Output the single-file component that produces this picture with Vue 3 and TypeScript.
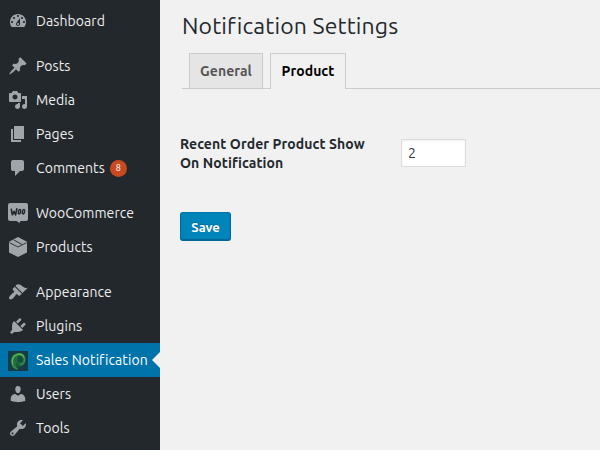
<script setup lang="ts">
import { ref } from 'vue'

interface MenuItem {
  label: string
  icon: string
  path?: string
  count?: number
}

const groups: MenuItem[][] = [
  [
    { label: 'Dashboard', icon: 'dashboard', path: 'M3.76 16h12.48c1.1-1.37 1.76-3.11 1.76-5 0-4.42-3.58-8-8-8s-8 3.58-8 8c0 1.89.66 3.63 1.76 5zM10 4c.55 0 1 .45 1 1s-.45 1-1 1-1-.45-1-1 .45-1 1-1zM6 6c.55 0 1 .45 1 1s-.45 1-1 1-1-.45-1-1 .45-1 1-1zm8 0c.55 0 1 .45 1 1s-.45 1-1 1-1-.45-1-1 .45-1 1-1zm-5.37 5.55L12 7v6c0 1.1-.9 2-2 2s-2-.9-2-2c0-.57.24-1.08.63-1.45zM4 10c.55 0 1 .45 1 1s-.45 1-1 1-1-.45-1-1 .45-1 1-1zm12 0c.55 0 1 .45 1 1s-.45 1-1 1-1-.45-1-1 .45-1 1-1zm-5 3c0-.55-.45-1-1-1s-1 .45-1 1 .45 1 1 1 1-.45 1-1z' },
  ],
  [
    { label: 'Posts', icon: 'post', path: 'M10.44 3.02l1.82-1.82 6.36 6.35-1.83 1.82c-1.05-.68-2.48-.57-3.41.36l-.75.75c-.92.93-1.04 2.35-.35 3.41l-1.83 1.82-2.41-2.41-2.8 2.79c-.42.42-3.38 2.71-3.8 2.29s1.86-3.39 2.28-3.81l2.79-2.79L4.1 9.36l1.83-1.82c1.05.69 2.48.57 3.4-.36l.75-.75c.93-.92 1.05-2.35.36-3.41z' },
    { label: 'Media', icon: 'media', path: 'M13 11V4c0-.55-.45-1-1-1h-1.67L9 1H5L3.67 3H2c-.55 0-1 .45-1 1v7c0 .55.45 1 1 1h10c.55 0 1-.45 1-1zM7 4.5c1.38 0 2.5 1.12 2.5 2.5S8.38 9.5 7 9.5 4.5 8.38 4.5 7 5.62 4.5 7 4.5zM14 6h5v10.5c0 1.38-1.12 2.5-2.5 2.5S14 17.88 14 16.5s1.12-2.5 2.5-2.5c.17 0 .34.02.5.05V9h-3V6zm-4 8.05V13h2v3.5c0 1.38-1.12 2.5-2.5 2.5S7 17.88 7 16.5 8.12 14 9.5 14c.17 0 .34.02.5.05z' },
    { label: 'Pages', icon: 'page', path: 'M6 15V2h10v13H6zm-1 1h8v2H3V5h2v11z' },
    { label: 'Comments', icon: 'comments', count: 8, path: 'M5 2h9c1.1 0 2 .9 2 2v7c0 1.1-.9 2-2 2h-2l-5 5v-5H5c-1.1 0-2-.9-2-2V4c0-1.1.9-2 2-2z' },
  ],
  [
    { label: 'WooCommerce', icon: 'woo' },
    { label: 'Products', icon: 'box' },
  ],
  [
    { label: 'Appearance', icon: 'appearance', path: 'M14.48 11.06L7.41 3.99l1.5-1.5c.5-.56 2.3-.47 3.51.32 1.21.8 1.43 1.28 2.91 2.1 1.18.64 2.45 1.26 4.45.85zm-.71.71L6.7 4.7 4.93 6.47c-.39.39-.39 1.02 0 1.41l1.06 1.06c.39.39.39 1.03 0 1.42-.6.6-1.43 1.11-2.21 1.69-.35.26-.7.53-1.01.84C1.43 14.23.4 16.08 1.4 17.07c.99 1 2.84-.03 4.18-1.36.31-.31.58-.66.85-1.02.57-.78 1.08-1.61 1.69-2.21.39-.39 1.02-.39 1.41 0l1.06 1.06c.39.39 1.02.39 1.41 0z' },
    { label: 'Plugins', icon: 'plugins', path: 'M13.11 4.36L9.87 7.6 8 5.73l3.24-3.24c.35-.34 1.05-.2 1.56.32.52.51.66 1.21.31 1.55zm-8 1.77l.91-1.12 9.01 9.01-1.19.84c-.71.71-2.63 1.16-3.82 1.16H6.14L4.9 17.26c-.59.59-1.54.59-2.12 0-.59-.58-.59-1.53 0-2.12l1.24-1.24v-3.88c0-1.13.4-3.19 1.09-3.89zm7.26 3.97l3.24-3.24c.34-.35 1.04-.21 1.55.31.52.51.66 1.21.31 1.55l-3.24 3.25z' },
    { label: 'Sales Notification', icon: 'sales' },
    { label: 'Users', icon: 'users', path: 'M10 9.25c-2.27 0-2.73-3.44-2.73-3.44C7 4.02 7.82 2 9.97 2c2.16 0 2.98 2.02 2.71 3.81 0 0-.41 3.44-2.68 3.44zm0 2.57L12.72 10c2.39 0 4.52 2.33 4.52 4.53v2.49s-3.65 1.13-7.24 1.13c-3.65 0-7.24-1.13-7.24-1.13v-2.49c0-2.25 1.94-4.48 4.47-4.48z' },
    { label: 'Tools', icon: 'tools', path: 'M16.68 9.77c-1.34 1.34-3.3 1.67-4.95.99l-5.41 6.52c-.99.99-2.59.99-3.58 0s-.99-2.59 0-3.57l6.52-5.42c-.68-1.65-.35-3.61.99-4.95 1.28-1.28 3.12-1.62 4.72-1.06l-2.89 2.89 2.82 2.82 2.86-2.87c.53 1.58.18 3.39-1.08 4.65zM3.81 16.21c.4.39 1.04.39 1.43 0 .4-.4.4-1.04 0-1.43-.39-.4-1.03-.4-1.43 0-.39.39-.39 1.03 0 1.43z' },
  ],
]

const current = ref('Sales Notification')
const tab = ref('Product')
const tabs = ['General', 'Product']
const productCount = ref('2')
</script>

<template>
  <div class="admin">
    <nav class="menu">
      <ul v-for="(group, g) in groups" :key="g" class="group">
        <li
          v-for="item in group"
          :key="item.label"
          class="item"
          :class="{ current: item.label === current }"
          @click="current = item.label"
        >
          <svg class="icon" :class="item.icon" viewBox="0 0 20 20" width="20" height="20">
            <path v-if="item.path" :d="item.path" fill="currentColor" fill-rule="evenodd" />
            <g v-else-if="item.icon === 'woo'">
              <path d="M2 0h16a2 2 0 0 1 2 2v14a2 2 0 0 1-2 2h-5.500l-1 2-3-2H2a2 2 0 0 1-2-2V2a2 2 0 0 1 2-2z" fill="currentColor" />
              <path d="M3.300 6.300l1 5.500 1.700-3.500 1.600 3.500L8.800 5.800" fill="none" stroke="#23282d" stroke-width="1.600" stroke-linejoin="round" stroke-linecap="round" />
              <ellipse cx="11.500" cy="8.700" rx="1.100" ry="2.200" transform="rotate(12 11.500 8.700)" fill="none" stroke="#23282d" stroke-width="1.500" />
              <ellipse cx="15.500" cy="8.700" rx="1.100" ry="2.200" transform="rotate(12 15.500 8.700)" fill="none" stroke="#23282d" stroke-width="1.500" />
            </g>
            <g v-else-if="item.icon === 'box'">
              <path d="M10 0l9 4.800v10.700l-9 4.500-9-4.500V4.800z" fill="currentColor" />
              <path d="M1.500 5.700L10 10l8.500-4.300M5.700 2.900l8.300 4.600" fill="none" stroke="#23282d" stroke-width="0.900" />
            </g>
            <g v-else>
              <rect width="20" height="20" fill="#173b46" />
              <circle cx="10.500" cy="9.500" r="6.800" fill="#17583f" />
              <path d="M10 18.500C1 16 1 3 10.500 2c8-.2 8.500 11 2 12-3 .3-4-2.500-2.500-4.300-2.500 2.300-2.500 6 0 8.800z" fill="#237a40" fill-opacity=".65" />
              <path d="M9.500 18C2 16 2 4 10.500 2.800 18 2.500 18.500 12.800 12.500 13.700" fill="none" stroke="#329447" stroke-width="1.700" />
              <path d="M5 13.500C3.200 9 5 4.500 10 3.500c3-.4 5 1 6 3" fill="none" stroke="#62bb50" stroke-width="1.100" />
              <ellipse cx="12.300" cy="8.300" rx="2.800" ry="3.500" fill="#174b41" />
            </g>
          </svg>
          <span class="label">{{ item.label }}</span>
          <span v-if="item.count" class="badge">{{ item.count }}</span>
        </li>
      </ul>
    </nav>

    <main class="content">
      <h1 class="title">Notification Settings</h1>
      <div class="tabs">
        <button
          v-for="name in tabs"
          :key="name"
          class="tab"
          :class="[name.toLowerCase(), { active: name === tab }]"
          @click="tab = name"
        >{{ name }}</button>
      </div>
      <form class="form" @submit.prevent>
        <div class="field">
          <label class="field-label" for="count">Recent Order Product Show<br>On Notification</label>
          <input id="count" v-model="productCount" class="input" type="text">
        </div>
        <button class="save" type="submit">Save</button>
      </form>
    </main>
  </div>
</template>

<style>
body {
  margin: 0;
  background: #f1f1f1;
  overflow: hidden;
}
</style>

<style scoped>
.admin {
  display: flex;
  width: 600px;
  height: 450px;
  overflow: hidden;
  font-family: "Ubuntu", "Noto Sans", sans-serif;
  background: #f1f1f1;
}
.menu {
  display: flex;
  flex-direction: column;
  gap: 11px;
  flex: none;
  width: 160px;
  box-sizing: border-box;
  padding-top: 4px;
  background: #23282d;
}
.group {
  list-style: none;
  margin: 0;
  padding: 0;
}
.item {
  position: relative;
  display: flex;
  align-items: center;
  height: 34px;
  padding-left: 8px;
  color: #eee;
  font-size: 14px;
  line-height: 18px;
  letter-spacing: 0.08px;
  white-space: nowrap;
  cursor: pointer;
}
.icon {
  flex: none;
  margin-right: 8px;
  color: #a0a5aa;
}
.sales {
  position: relative;
  top: 1px;
}
.current {
  background: #0073aa;
  color: #fff;
}
.current::after {
  content: "";
  position: absolute;
  right: 0;
  top: 9px;
  border: 8px solid transparent;
  border-left: 0;
  border-right-color: #f1f1f1;
}
.badge {
  width: 17px;
  height: 17px;
  margin-left: 5px;
  border-radius: 50%;
  background: #ca4a1f;
  color: #fff;
  font-size: 9px;
  line-height: 17px;
  letter-spacing: 0;
  text-align: center;
}
.content {
  flex: 1;
  min-width: 0;
  padding-left: 20px;
}
.title {
  margin: 0;
  padding: 11px 0 0 2px;
  font-size: 23px;
  font-weight: 400;
  line-height: 30px;
  letter-spacing: 0.14px;
  color: #23282d;
  white-space: nowrap;
}
.tabs {
  display: flex;
  gap: 7px;
  height: 35px;
  margin: 12px 0 0 2px;
  padding-left: 7px;
  border-bottom: 1px solid #ccc;
}
.tab {
  display: flex;
  align-items: flex-start;
  justify-content: center;
  box-sizing: border-box;
  height: 35px;
  padding: 0;
  border: 1px solid #ccc;
  border-bottom: 0;
  background: #e5e5e5;
  color: #555;
  font: 700 14px/34px "Ubuntu", "Noto Sans", sans-serif;
  letter-spacing: 0.05px;
}
.general {
  width: 74px;
}
.product {
  width: 76px;
}
.active {
  height: 36px;
  background: #f1f1f1;
  color: #000;
}
.field {
  display: flex;
  align-items: flex-start;
  padding-top: 46px;
}
.field-label {
  width: 221px;
  color: #23282d;
  font-size: 14px;
  font-weight: 700;
  line-height: 19px;
  letter-spacing: 0.09px;
  white-space: nowrap;
}
.input {
  box-sizing: border-box;
  width: 65px;
  height: 28px;
  margin-top: 4px;
  padding: 0 6px;
  border: 1px solid #ddd;
  background: #fff;
  box-shadow: inset 0 1px 2px rgba(0, 0, 0, 0.07);
  color: #32373c;
  font: 14px "Ubuntu", "Noto Sans", sans-serif;
  outline: none;
}
.save {
  display: block;
  box-sizing: border-box;
  width: 51px;
  height: 29px;
  margin-top: 39px;
  padding: 0;
  border: 1px solid;
  border-color: #0073aa #006799 #006799;
  border-radius: 3px;
  background: #0085ba;
  box-shadow: inset 0 -1px 0 #006799;
  color: #fff;
  font: 700 13px/26px "Ubuntu", "Noto Sans", sans-serif;
  text-shadow: 0 -1px 1px #006799;
}
</style>
